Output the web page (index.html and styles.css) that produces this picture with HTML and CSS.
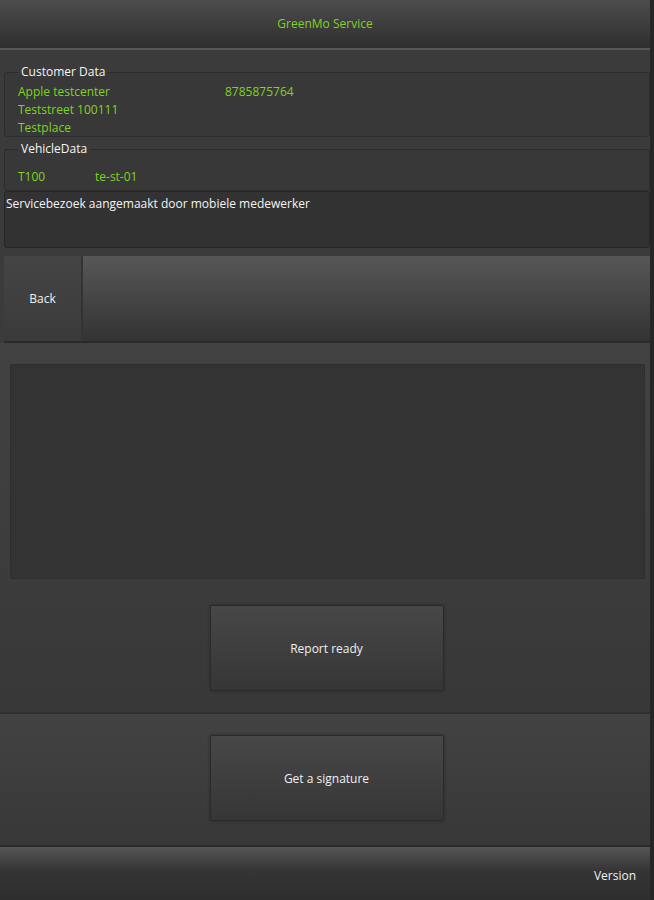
FILE: index.html
```html
<!DOCTYPE html>
<html>
<head>
<meta charset="utf-8">
<link rel="stylesheet" href="styles.css">
</head>
<body>
<div class="app">
  <header class="topbar"><span class="title">GreenMo Service</span></header>
  <main class="main">
    <fieldset class="group customer">
      <legend>Customer Data</legend>
      <div class="cust-grid">
        <div class="col">
          <div>Apple testcenter</div>
          <div>Teststreet 100111</div>
          <div>Testplace</div>
        </div>
        <div class="col"><div>8785875764</div></div>
      </div>
    </fieldset>
    <fieldset class="group vehicle">
      <legend>VehicleData</legend>
      <div class="veh-row"><span class="veh-a">T100</span><span>te-st-01</span></div>
    </fieldset>
    <div class="notes">Servicebezoek aangemaakt door mobiele medewerker</div>
    <div class="navbar">
      <button class="btn back">Back</button>
      <div class="navfill"></div>
    </div>
    <section class="panel report">
      <div class="canvas"></div>
      <div class="btnrow"><button class="btn big">Report ready</button></div>
    </section>
    <section class="panel sign">
      <div class="btnrow"><button class="btn big">Get a signature</button></div>
    </section>
  </main>
  <footer class="footer"><span>Version</span></footer>
</div>
</body>
</html>
```
FILE: styles.css
```css
* { box-sizing: border-box; }
html, body { margin: 0; padding: 0; }
body {
  width: 654px; height: 900px; overflow: hidden;
  background: #2b2b2b;
  font-family: "Open Sans", "Noto Sans", sans-serif;
  font-size: 12px;
  color: #f0f0f0;
}
.app { display: flex; flex-direction: column; height: 900px; width: 654px; border-right: 4px solid #262626; }
.topbar {
  height: 50px; flex: none;
  display: flex; align-items: center; justify-content: center;
  background: linear-gradient(#4c4c4c, #2f2f2f);
  border-bottom: 2px solid #575757;
  padding-bottom: 2px;
}
.title { color: #7fd321; font-size: 12px; }
.main { flex: 1; background: #3b3b3b; display: flex; flex-direction: column; padding-top: 15px; }
.group {
  margin: 0 0 0 4px; width: 646px;
  border: 1px solid #2c2c2c;
  border-radius: 3px;
  padding: 0 13px 0;
  background: #383838;
  color: #7fd321;
  line-height: 18px;
}
.group legend { color: #f4f4f4; padding: 0 3px; margin-left: 0; line-height: 14px; }
.customer { height: 72px; padding-top: 4px; }
.cust-grid { display: grid; grid-template-columns: 207px 1fr; }
.vehicle { height: 49px; margin-top: 5px; padding-top: 12px; }
.veh-row { display: flex; }
.veh-a { width: 77px; }
.notes {
  margin-left: 4px; width: 646px; height: 57px;
  background: #323232; border: 1px solid #262626; border-radius: 3px;
  padding: 3px 1px; line-height: 18px; color: #f4f4f4;
}
.navbar {
  margin: 8px 0 0 4px; width: 646px; height: 87px;
  display: flex;
  border-bottom: 2px solid #2a2a2a;
}
.btn {
  font-family: inherit; font-size: 12px; color: #f0f0f0;
  background: linear-gradient(#474747, #363636);
  border: 1px solid #2b2b2b; border-radius: 2px;
  cursor: pointer;
}
.back { width: 79px; height: 85px; background: linear-gradient(#454545, #3a3a3a); border: none; border-right: 2px solid #333; }
.navfill { flex: 1; background: linear-gradient(#575757, #333); }
.panel { width: 650px; background: linear-gradient(#424242, #383838); padding-left: 10px; padding-right: 5px; }
.report { height: 371px; padding-top: 21px; display: flex; flex-direction: column; border-bottom: 2px solid #2f2f2f; }
.canvas { height: 215px; width: 635px; background: #333; border-radius: 2px; border: 1px solid #2e2e2e; }
.btnrow { display: flex; justify-content: center; padding-right: 2px; }
.report .btnrow { margin-top: 26px; }
.big { width: 234px; height: 86px; box-shadow: 0 0 3px #2a2a2a; }
.sign { height: 133px; padding-top: 21px; border-bottom: 2px solid #2a2a2a; }
.footer {
  height: 53px; flex: none;
  background: linear-gradient(#555, #343434 45%, #2e2e2e);
  display: flex; align-items: center; justify-content: flex-end;
  padding: 3px 14px 0 0;
}
```
